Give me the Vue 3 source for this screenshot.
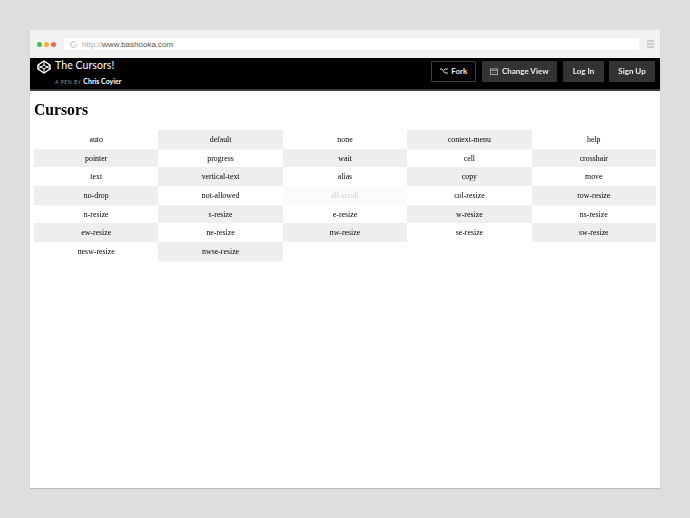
<script setup>
const cursors = ['auto','default','none','context-menu','help','pointer','progress','wait','cell','crosshair','text','vertical-text','alias','copy','move','no-drop','not-allowed','all-scroll','col-resize','row-resize','n-resize','s-resize','e-resize','w-resize','ns-resize','ew-resize','ne-resize','nw-resize','se-resize','sw-resize','nesw-resize','nwse-resize']
</script>

<template>
  <div class="page">
    <div class="window">
      <div class="chrome">
        <div class="dots">
          <span class="dot green"></span>
          <span class="dot yellow"></span>
          <span class="dot red"></span>
        </div>
        <div class="address">
          <svg class="reload" width="7" height="7" viewBox="0 0 7 7">
            <path d="M5.6 1.4A3 3 0 1 0 6.4 3.5" fill="none" stroke="#aaa" stroke-width="0.8" />
          </svg>
          <span class="scheme">http://</span><span class="host">www.bashooka.com</span>
        </div>
        <div class="menu"><i></i><i></i><i></i></div>
      </div>
      <header class="bar">
        <div class="brand">
          <svg class="logo" width="14" height="14" viewBox="0 0 14 14" fill="none" stroke="#fff" stroke-width="1.5" stroke-linejoin="round">
            <path d="M7 1 13 5v4l-6 4-6-4V5z" />
            <path d="M1 5l6 4 6-4M1 9l6-4 6 4M7 1v4M7 9v4" stroke-width="1" />
          </svg>
          <div class="titles">
            <div class="title">The Cursors!</div>
            <div class="byline"><span class="pen">A PEN BY</span> <span class="author">Chris Coyier</span></div>
          </div>
        </div>
        <div class="actions">
          <button class="btn outline">
            <svg width="8" height="6" viewBox="0 0 8 6" fill="none" stroke="#ddd" stroke-width="1">
              <path d="M0 1h2l3 4h3M3.800 2.400 5 1h3" />
            </svg>
            Fork
          </button>
          <button class="btn view">
            <svg width="8" height="7" viewBox="0 0 8 7" fill="none" stroke="#bbb" stroke-width="0.8">
              <rect x="0.400" y="0.900" width="7.200" height="5.700" />
              <path d="M0.400 2.400h7.200M2.500 4.700h0.800M4.700 4.700h0.800" />
            </svg>
            Change View
          </button>
          <button class="btn login">Log In</button>
          <button class="btn signup">Sign Up</button>
        </div>
      </header>
      <main class="content">
        <h1>Cursors</h1>
        <div class="grid">
          <div v-for="(c, i) in cursors" :key="c" class="cell" :class="{ alt: i % 2 === 1, faded: c === 'all-scroll' }">{{ c }}</div>
        </div>
      </main>
    </div>
  </div>
</template>

<style>
html, body { margin: 0; background: #dddee0; }
</style>

<style scoped>
.page {
  width: 690px;
  height: 518px;
  padding: 30px 30px 0;
  box-sizing: border-box;
  background: #dddee0;
  overflow: hidden;
}
.window {
  height: 458px;
  background: #fff;
  display: flex;
  flex-direction: column;
  box-shadow: 0 1px 1px rgba(0,0,0,.15);
  filter: blur(0.25px);
}
.chrome {
  height: 28px;
  flex: none;
  background: #f2f2f2;
  display: flex;
  align-items: center;
  padding: 0 6px 0 7px;
  box-sizing: border-box;
}
.dots { display: flex; gap: 2px; width: 27px; }
.dot { width: 5px; height: 5px; border-radius: 50%; }
.green { background: #3fc14f; }
.yellow { background: #f8b133; }
.red { background: #f4615e; }
.address {
  width: 575px;
  height: 12px;
  background: #fff;
  display: flex;
  align-items: center;
  padding-left: 6px;
  box-sizing: border-box;
  font: 8px "Liberation Sans", sans-serif;
}
.reload { margin-right: 5px; }
.scheme { color: #aaa; }
.host { color: #555; }
.menu { margin-left: 8px; display: flex; flex-direction: column; gap: 1.500px; width: 7px; }
.menu i { display: block; height: 1.500px; background: #ccc; }
.bar {
  height: 33px;
  flex: none;
  background: #000;
  border-bottom: 2px solid #3c3c3c;
  box-sizing: border-box;
  display: flex;
  justify-content: space-between;
  align-items: flex-start;
  padding: 0 5px 0 7px;
  font-family: Lato, sans-serif;
}
.brand { display: flex; align-items: flex-start; }
.logo { margin-top: 2px; }
.titles { margin-left: 4px; }
.title { color: #fff; font-size: 10.500px; line-height: 14px; letter-spacing: .08px; }
.byline { margin-top: 4.500px; font-size: 7px; line-height: 9px; white-space: nowrap; }
.pen { color: #999; font-size: 5px; letter-spacing: .6px; }
.author { color: #fff; font-weight: 700; }
.actions { display: flex; gap: 6px; margin-top: 3px; }
.btn {
  height: 21px;
  padding: 0 0 1px;
  border: 0;
  border-radius: 1px;
  background: #333;
  color: #eee;
  font: 700 8px Lato, sans-serif;
  display: flex;
  align-items: center;
  justify-content: center;
  gap: 3.500px;
  box-sizing: border-box;
}
.outline { width: 45px; background: #000; border: 1px solid #3f3f3f; }
.view { width: 75px; }
.login { width: 41px; }
.signup { width: 46px; margin-left: -1px; }
.content { padding: 0 4px; flex: 1; }
h1 {
  margin: 9px 0 11px;
  font: 700 15.700px/19px "Liberation Serif", serif;
  color: #000;
}
.grid {
  display: grid;
  grid-template-columns: repeat(5, 1fr);
  grid-auto-rows: 18.700px;
}
.cell {
  text-align: center;
  font: 7.850px/18.700px "Liberation Serif", serif;
  color: #000;
  padding-top: 1px;
  box-sizing: border-box;
  overflow: hidden;
}
.alt { background: #eee; }
.faded { background: #fbfbfb; color: #ccc; }
</style>
